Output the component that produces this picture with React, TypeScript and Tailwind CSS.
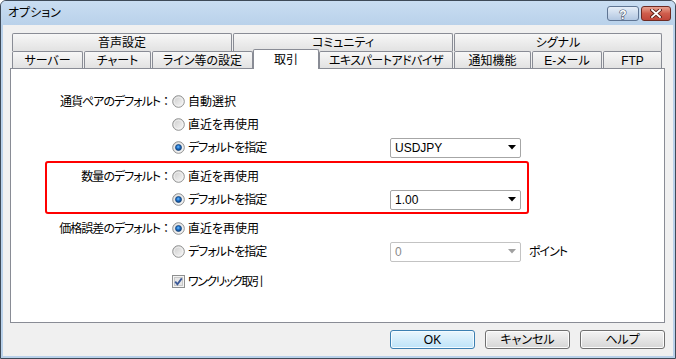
import React, { useId } from "react";

const FONT =
  "font-['Liberation_Sans','Noto_Sans_CJK_JP',sans-serif] [font-feature-settings:'palt']";

function Radio({ checked }: { checked?: boolean }) {
  const id = useId().replace(/:/g, "");
  return (
    <svg width="13" height="13" viewBox="0 0 13 13" className="shrink-0">
      <defs>
        <linearGradient id={`g${id}`} x1="0" y1="0" x2="1" y2="1">
          <stop offset="0" stopColor="#c9c9c9" />
          <stop offset="1" stopColor="#fbfbfb" />
        </linearGradient>
        <radialGradient id={`b${id}`} cx="0.45" cy="0.4" r="0.6">
          <stop offset="0" stopColor="#6fc0ff" />
          <stop offset="0.5" stopColor="#1e6fc8" />
          <stop offset="1" stopColor="#0b3f7d" />
        </radialGradient>
      </defs>
      <circle cx="6.5" cy="6.5" r="5.8" fill={`url(#g${id})`} stroke="#8e8f8f" strokeWidth="1" />
      <circle cx="6.5" cy="6.5" r="4.4" fill="none" stroke="#f4f4f4" strokeWidth="0.8" />
      {checked && <circle cx="6.5" cy="6.5" r="3" fill={`url(#b${id})`} stroke="#14447a" strokeWidth="0.7" />}
    </svg>
  );
}

function Checkbox() {
  return (
    <svg width="13" height="13" viewBox="0 0 13 13" className="shrink-0">
      <rect x="0.5" y="0.5" width="12" height="12" fill="#f4f4f4" stroke="#8e8f8f" />
      <rect x="2.5" y="2.5" width="8" height="8" fill="#e6e6e6" stroke="#c8c8c8" />
      <path d="M3.2 6.6 L5.4 9.2 L9.8 3.4" fill="none" stroke="#3d5a98" strokeWidth="1.8" />
    </svg>
  );
}

function Combo({ value, disabled }: { value: string; disabled?: boolean }) {
  return (
    <div
      className={`w-[131px] h-[20px] shrink-0 flex items-center pl-[4px] pr-[4px] rounded-[2px] border bg-white ${
        disabled ? "border-[#c3c3c3] text-[#8a8a8a]" : "border-[#a6a6a6] text-black"
      }`}
    >
      <span className="flex-1">{value}</span>
      <svg width="8" height="5" viewBox="0 0 8 5">
        <polygon points="0,0 8,0 4,4.5" fill={disabled ? "#a0a0a0" : "#000"} />
      </svg>
    </div>
  );
}

function Option({ checked, text, tight }: { checked?: boolean; text: string; tight?: boolean }) {
  return (
    <div className="w-[218px] shrink-0 flex items-center">
      <Radio checked={checked} />
      <span className={`ml-[3px] ${tight ? "tracking-[-1px]" : ""}`}>{text}</span>
    </div>
  );
}

function Label({ text, wide }: { text: string; wide?: boolean }) {
  return (
    <div className={`${wide ? "w-[161px]" : "w-[125px]"} shrink-0 flex justify-end`}>
      <span className="tracking-[-1px]">{text}</span>
      <span className="w-[12px] text-center [font-feature-settings:normal]">：</span>
    </div>
  );
}

const tab1 =
  "h-[18px] pt-[1px] flex items-center justify-center border border-b-0 border-[#898c95] rounded-t-[2px] bg-linear-to-b from-[#f7f7f7] to-[#e2e2e2]";
const tab2 =
  "h-[17px] pt-[2px] flex items-center justify-center border border-b-0 border-[#898c95] rounded-t-[2px] bg-linear-to-b from-[#f7f7f7] to-[#e2e2e2]";

function Btn({ children, primary }: { children: React.ReactNode; primary?: boolean }) {
  return (
    <div
      className={`w-[85px] h-[19px] flex items-center justify-center rounded-[3px] border ${
        primary
          ? "border-[#3c7fb1] bg-linear-to-b from-[#eaf6fd] to-[#bde3f8] shadow-[inset_0_0_0_1px_#f4fbff]"
          : "border-[#707070] bg-linear-to-b from-[#f4f4f4] to-[#d6d6d6] shadow-[inset_0_0_0_1px_#fcfcfc]"
      }`}
    >
      {children}
    </div>
  );
}

export default function App() {
  return (
    <div className="w-[676px] h-[359px] overflow-hidden bg-white">
      <div
        className={`w-[676px] h-[359px] flex flex-col border border-[#3e4a58] rounded-t-[6px] bg-[#b9d1ea] text-[12px] leading-[14px] text-black ${FONT}`}
      >
        {/* Title bar */}
        <div className="h-[24px] shrink-0 flex items-start rounded-t-[5px] bg-linear-to-b from-[#c9ddf2] to-[#b9d1ea]">
          <span className="mt-[5px] ml-[7px]">オプション</span>
          <div className="ml-auto mt-[5px] mr-[4px] flex gap-[2px]">
            <div className="w-[32px] h-[15px] rounded-[3px] border border-[#5f7593] bg-linear-to-b from-[#e6eef8] to-[#b2c7e1] flex items-center justify-center">
              <svg width="10" height="12" viewBox="0 0 10 12">
                <text
                  x="5"
                  y="10.5"
                  textAnchor="middle"
                  fontSize="12"
                  fontWeight="bold"
                  fontFamily="Liberation Sans, sans-serif"
                  fill="#ffffff"
                  stroke="#4a5a70"
                  strokeWidth="1.2"
                  paintOrder="stroke"
                >
                  ?
                </text>
              </svg>
            </div>
            <div className="w-[30px] h-[15px] rounded-[3px] border border-[#6e2a22] bg-linear-to-b from-[#e6a190] via-[#cf5d4c] to-[#c0463a] flex items-center justify-center">
              <svg width="12" height="9" viewBox="0 0 12 9">
                <path d="M2 1 L10 8 M10 1 L2 8" stroke="#5a1d16" strokeWidth="3.6" strokeLinecap="square" />
                <path d="M2 1 L10 8 M10 1 L2 8" stroke="#ffffff" strokeWidth="1.8" strokeLinecap="square" />
              </svg>
            </div>
          </div>
        </div>

        {/* Frame around client */}
        <div className="flex-1 px-[2px] pb-[2px] flex flex-col">
          <div className="flex-1 bg-[#f0f0f0] flex flex-col pt-[8px]">
            {/* Tab row 1 */}
            <div className="ml-[9px] flex gap-[1px]">
              <div className={`${tab1} w-[220px]`}>音声設定</div>
              <div className={`${tab1} w-[220px]`}>コミュニティ</div>
              <div className={`${tab1} w-[208px]`}>シグナル</div>
            </div>
            {/* Tab row 2 */}
            <div className="ml-[9px] flex items-end h-[17px]">
              <div className={`${tab2} w-[71px]`}>サーバー</div>
              <div className={`${tab2} w-[67px] ml-[1px]`}>チャート</div>
              <div className={`${tab2} w-[101px] ml-[1px]`}>ライン等の設定</div>
              <div className="w-[66px] h-[20px] -mb-[1px] relative z-10 bg-white border border-b-0 border-[#898c95] rounded-t-[2px] flex items-center justify-center">
                取引
              </div>
              <div className={`${tab2} w-[134px] tracking-[-0.5px]`}>エキスパートアドバイザ</div>
              <div className={`${tab2} w-[77px] ml-[1px]`}>通知機能</div>
              <div className={`${tab2} w-[70px] ml-[1px]`}>E-メール</div>
              <div className={`${tab2} w-[59px] ml-[1px]`}>FTP</div>
            </div>

            {/* Panel */}
            <div className="ml-[7px] w-[655px] h-[255px] shrink-0 border border-[#898c95] bg-white flex flex-col pt-[21px]">
              <div className="flex items-center h-[23px]">
                <Label wide text="通貨ペアのデフォルト" />
                <Option text="自動選択" />
              </div>
              <div className="flex items-center h-[23px]">
                <div className="w-[161px]" />
                <Option text="直近を再使用" />
              </div>
              <div className="flex items-center h-[23px]">
                <div className="w-[161px]" />
                <Option checked tight text="デフォルトを指定" />
                <Combo value="USDJPY" />
              </div>

              <div className="ml-[34px] w-[484px] mt-[2px] border-2 border-[#ff0000] rounded-[3px] pt-[2px] pb-[1px]">
                <div className="flex items-center h-[23px]">
                  <Label text="数量のデフォルト" />
                  <Option text="直近を再使用" />
                </div>
                <div className="flex items-center h-[23px]">
                  <div className="w-[125px]" />
                  <Option checked tight text="デフォルトを指定" />
                  <Combo value="1.00" />
                </div>
              </div>

              <div className="flex items-center h-[23px] mt-[3px]">
                <Label wide text="価格誤差のデフォルト" />
                <Option checked text="直近を再使用" />
              </div>
              <div className="flex items-center h-[23px]">
                <div className="w-[161px]" />
                <Option tight text="デフォルトを指定" />
                <Combo value="0" disabled />
                <span className="ml-[8px] tracking-[-1px]">ポイント</span>
              </div>
              <div className="flex items-center h-[23px] mt-[7px]">
                <div className="w-[161px]" />
                <Checkbox />
                <span className="ml-[3px] tracking-[-1.5px]">ワンクリック取引</span>
              </div>
            </div>

            {/* Buttons */}
            <div className="mt-[7px] flex justify-end gap-[10px] pr-[8px]">
              <Btn primary>OK</Btn>
              <Btn>キャンセル</Btn>
              <Btn>ヘルプ</Btn>
            </div>
          </div>
        </div>
      </div>
    </div>
  );
}
